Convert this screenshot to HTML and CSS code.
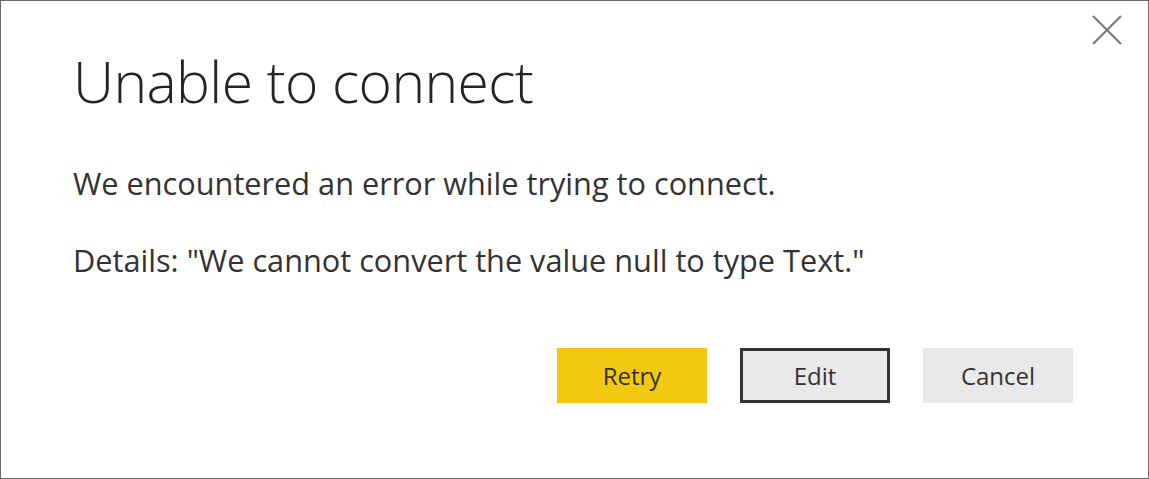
FILE: index.html
```html
<!DOCTYPE html>
<html>
<head>
<meta charset="utf-8">
<link rel="stylesheet" href="styles.css">
</head>
<body>
<div class="dialog">
  <button class="close" aria-label="Close">
    <svg width="30" height="30" viewBox="0 0 30 30"><path d="M1 1 L29 29 M29 1 L1 29" stroke="#7a7a7a" stroke-width="2.2" fill="none"/></svg>
  </button>
  <h1 class="title">Unable to connect</h1>
  <p class="msg">We encountered an error while trying to connect.</p>
  <p class="msg details">Details: "We cannot convert the value null to type Text."</p>
  <div class="actions">
    <button class="btn primary">Retry</button>
    <button class="btn outlined">Edit</button>
    <button class="btn">Cancel</button>
  </div>
</div>
</body>
</html>
```
FILE: styles.css
```css
html, body {
  margin: 0;
  padding: 0;
  background: #ffffff;
}
.dialog {
  position: relative;
  box-sizing: border-box;
  width: 1149px;
  height: 479px;
  border: 1px solid #6a6a6a;
  padding: 40px 75px 0 72px;
  font-family: "Open Sans", "Noto Sans", sans-serif;
  color: #333333;
}
.close {
  position: absolute;
  top: 14px;
  right: 26px;
  width: 30px;
  height: 30px;
  padding: 0;
  border: none;
  background: transparent;
}
.close svg { display: block; }
.title {
  margin: 0;
  font-size: 57px;
  font-weight: 300;
  letter-spacing: -0.6px;
  line-height: 80px;
  color: #252423;
}
.msg {
  margin: 0;
  font-size: 30.7px;
  font-weight: 400;
  line-height: 40px;
}
.title + .msg { margin-top: 42px; }
.details { margin-top: 37px; }
.actions {
  display: flex;
  justify-content: flex-end;
  gap: 33px;
  margin-top: 68px;
}
.btn {
  box-sizing: border-box;
  width: 150px;
  height: 55px;
  border: none;
  background: #e9e9e9;
  font-family: "Open Sans", "Noto Sans", sans-serif;
  font-size: 24px;
  color: #333333;
  padding: 0;
}
.btn.primary { background: #f2c811; }
.btn.outlined { border: 3px solid #333333; }
```
